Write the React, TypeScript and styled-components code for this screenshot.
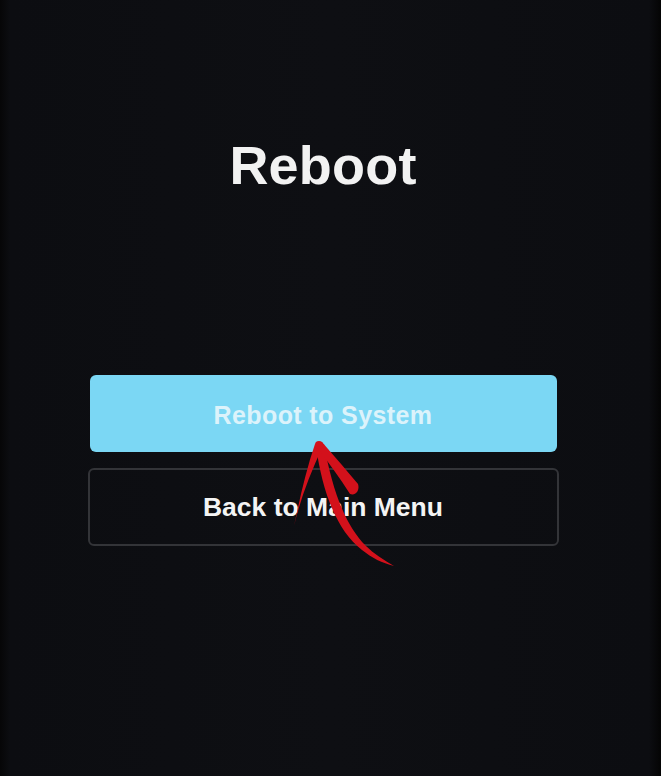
import React from "react";
import styled, { createGlobalStyle } from "styled-components";

const GlobalStyle = createGlobalStyle`
  html, body {
    margin: 0;
    padding: 0;
    background: #0d0e12;
  }
`;

const Screen = styled.div`
  position: relative;
  box-sizing: border-box;
  width: 661px;
  height: 776px;
  padding-right: 15px;
  overflow: hidden;
  display: flex;
  flex-direction: column;
  align-items: center;
  background: linear-gradient(
    to right,
    #060607 0px,
    #0c0d11 10px,
    #0e0f13 50%,
    #0c0d11 calc(100% - 12px),
    #040404 100%
  );
  font-family: "Liberation Sans", Arial, sans-serif;
`;

const Title = styled.h1`
  margin: 138px 0 0;
  font-size: 54px;
  line-height: 1;
  font-weight: 700;
  color: #f2f2f2;
  letter-spacing: 0.2px;
`;

const Actions = styled.div`
  margin-top: 183px;
  display: flex;
  flex-direction: column;
  align-items: center;
  gap: 16px;
`;

const ActionButton = styled.div<{ $primary?: boolean }>`
  box-sizing: border-box;
  display: flex;
  align-items: center;
  justify-content: center;
  width: ${(p) => (p.$primary ? "467px" : "471px")};
  height: ${(p) => (p.$primary ? "77px" : "78px")};
  border-radius: 6px;
  background: ${(p) => (p.$primary ? "#7bd7f4" : "transparent")};
  border: ${(p) => (p.$primary ? "none" : "2px solid #333438")};
  color: ${(p) => (p.$primary ? "#dcf3fb" : "#f4f4f4")};
  font-size: ${(p) => (p.$primary ? "25px" : "26.5px")};
  font-weight: 700;
  letter-spacing: ${(p) => (p.$primary ? "0.4px" : "0")};
  padding-top: ${(p) => (p.$primary ? "4px" : "0")};
`;

const Annotation = styled.svg`
  position: absolute;
  left: 0;
  top: 0;
  pointer-events: none;
`;

export default function App() {
  return (
    <>
      <GlobalStyle />
      <Screen>
        <Title>Reboot</Title>
        <Actions>
          <ActionButton $primary>Reboot to System</ActionButton>
          <ActionButton>Back to Main Menu</ActionButton>
        </Actions>
        <Annotation width="661" height="776" viewBox="0 0 661 776">
          <g fill="#d3111b">
            {/* shaft */}
            <path d="M316 446 C322 490, 336 530, 362 550 C372 558, 382 563, 394 566 C384 560, 374 554, 366 546 C344 524, 332 488, 324 444 Z" />
            {/* left barb */}
            <path d="M315 444 C306 470, 300 498, 294 526 C300 500, 310 474, 322 448 Z" />
            {/* right barb */}
            <path d="M316 446 C328 462, 340 478, 350 494 C356 496, 360 490, 358 484 C348 472, 336 458, 322 442 Z" />
            <circle cx="319" cy="445" r="4" />
          </g>
        </Annotation>
      </Screen>
    </>
  );
}
